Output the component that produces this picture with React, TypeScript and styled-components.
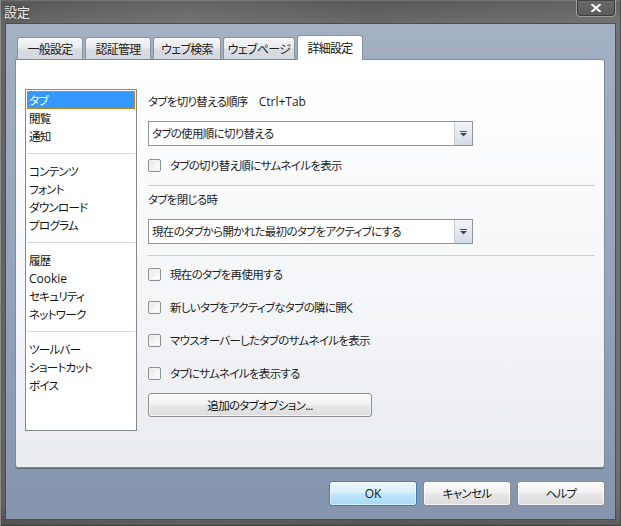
import React from "react";
import styled, { createGlobalStyle, css } from "styled-components";

const GlobalStyle = createGlobalStyle`
  html, body {
    margin: 0;
    padding: 0;
    background: #6a6a6a;
  }
  body {
    font-family: "Noto Sans CJK JP", "Liberation Sans", sans-serif;
    font-size: 11.5px;
    letter-spacing: -0.7px;
    font-feature-settings: "palt";
    color: #1e1e1e;
  }
`;

const Window = styled.div`
  width: 621px;
  height: 526px;
  box-sizing: border-box;
  display: flex;
  flex-direction: column;
  background:
    linear-gradient(90deg, rgba(0, 0, 0, 0.08), rgba(255, 255, 255, 0.04) 30%, rgba(0, 0, 0, 0.06) 60%, rgba(255, 255, 255, 0.03)),
    linear-gradient(180deg, #7c7c7c 0, #5e5e5e 2px, #686868 14px, #6e6e6e 23px, #6a6a6a 500px, #575757 526px);
  box-shadow: inset 1px 0 0 #8a8a8a, inset -1px 0 0 #4a4a4a, inset 0 -1px 0 #3e3e3e;
`;

const TitleBar = styled.div`
  height: 23px;
  display: flex;
  justify-content: space-between;
  align-items: flex-start;
  padding-left: 4px;
`;

const Title = styled.div`
  font-size: 13px;
  letter-spacing: 0;
  line-height: 24px;
  color: #ececec;
  text-shadow: 0 0 4px rgba(40, 40, 40, 0.8);
`;

const CloseButton = styled.div`
  width: 40px;
  height: 17px;
  margin-right: 5px;
  box-sizing: border-box;
  border: 1px solid #9c9c9c;
  border-top: none;
  border-radius: 0 0 4px 4px;
  background: linear-gradient(#6a6a6a, #5a5a5a);
  box-shadow: inset 0 0 0 1px rgba(30, 30, 30, 0.5);
  display: flex;
  align-items: center;
  justify-content: center;
`;

const Client = styled.div`
  flex: 1;
  margin: 0 5px 6px 5px;
  border: 1px solid #4e4e4e;
  background: linear-gradient(180deg, #a3b0c3 0%, #95a4ba 50%, #8595ae 100%);
  padding: 11px 10px 13px 9px;
  display: flex;
  flex-direction: column;
`;

const TabStrip = styled.div`
  height: 25px;
  margin-left: 2px;
  margin-bottom: -1px;
  display: flex;
  gap: 2px;
  align-items: flex-end;
  position: relative;
  z-index: 1;
`;

const Tab = styled.div<{ $w: number; $active?: boolean }>`
  width: ${(p) => p.$w}px;
  box-sizing: border-box;
  border: 1px solid #8a93a0;
  border-bottom: none;
  border-radius: 3px 3px 0 0;
  text-align: center;
  font-size: 12px;
  ${(p) =>
    p.$active
      ? css`
          height: 25px;
          line-height: 23px;
          background: #ffffff;
          color: #111;
        `
      : css`
          height: 22px;
          line-height: 21px;
          margin-bottom: 1px;
          color: #222;
          background: linear-gradient(180deg, #f4f5f6 0%, #e9ebee 45%, #d9dde3 55%, #d3d8de 100%);
          box-shadow: inset 0 1px 0 #ffffff;
        `}
`;

const Panel = styled.div`
  flex: 1;
  box-sizing: border-box;
  border: 1px solid #7f8a9b;
  border-radius: 0 3px 3px 3px;
  background: linear-gradient(180deg, #ffffff 0%, #f6f7f9 50%, #e9ecf0 100%);
  box-shadow: 0 1px 0 #5d6a7c;
  padding: 29px 9px 0 9px;
  display: flex;
  align-items: flex-start;
  gap: 11px;
`;

const ListBox = styled.div`
  width: 112px;
  height: 342px;
  flex: none;
  box-sizing: border-box;
  border: 1px solid #828790;
  background: #ffffff;
  padding: 1px;
`;

const ListItem = styled.div<{ $selected?: boolean }>`
  height: 18px;
  line-height: 18px;
  padding-left: 2px;
  white-space: nowrap;
  color: #111;
  ${(p) =>
    p.$selected &&
    css`
      background: #3399ff;
      color: #ffffff;
      outline: 1px dotted #d08a2c;
      outline-offset: -1px;
    `}
`;

const ListSeparator = styled.div`
  height: 1px;
  margin: 8px 0;
  background: #d8d8d8;
`;

const Latin = styled.span`
  font-family: "Open Sans", "Liberation Sans", sans-serif;
  font-size: 12px;
  letter-spacing: 0;
`;

const Content = styled.div`
  flex: 1;
  padding-top: 3px;
  display: flex;
  flex-direction: column;
`;

const Label = styled.div<{ $mt?: number }>`
  height: 18px;
  line-height: 18px;
  margin-top: ${(p) => p.$mt ?? 0}px;
  white-space: nowrap;
`;

const Shortcut = styled(Latin)`
  margin-left: 11px;
`;

const Select = styled.div<{ $mt?: number }>`
  width: 325px;
  height: 25px;
  margin-top: ${(p) => p.$mt ?? 11}px;
  box-sizing: border-box;
  border: 1px solid #8f949b;
  background: #ffffff;
  display: flex;
`;

const SelectText = styled.div`
  flex: 1;
  padding-left: 3px;
  line-height: 23px;
  white-space: nowrap;
`;

const SelectArrow = styled.div`
  width: 17px;
  border-left: 1px solid #c5cbd3;
  background: linear-gradient(180deg, #f2f4f7 0%, #e4e8ee 50%, #d5dce6 100%);
  display: flex;
  align-items: center;
  justify-content: center;
`;

const CheckRow = styled.div<{ $mt: number }>`
  height: 18px;
  margin-top: ${(p) => p.$mt}px;
  display: flex;
  align-items: center;
  gap: 9px;
  white-space: nowrap;
`;

const Box = styled.span`
  width: 13px;
  height: 13px;
  flex: none;
  box-sizing: border-box;
  border: 1px solid #8e8f8f;
  border-radius: 2px;
  background: linear-gradient(135deg, #e3e3e3 0%, #f6f6f6 60%, #ffffff 100%);
  box-shadow: inset 0 0 0 1px #f4f4f4;
`;

const Rule = styled.div<{ $mt: number }>`
  height: 1px;
  margin-top: ${(p) => p.$mt}px;
  background: #c8cbd0;
`;

const Button = styled.div<{ $w: number; $default?: boolean; $mt?: number }>`
  width: ${(p) => p.$w}px;
  height: ${(p) => (p.$default !== undefined ? 25 : 24)}px;
  margin-top: ${(p) => p.$mt ?? 0}px;
  box-sizing: border-box;
  border-radius: 3px;
  text-align: center;
  line-height: ${(p) => (p.$default !== undefined ? 23 : 22)}px;
  color: #111;
  white-space: nowrap;
  ${(p) =>
    p.$default
      ? css`
          border: 1px solid #3c7fb1;
          background: linear-gradient(180deg, #eaf6fd 0%, #d9f0fc 45%, #bee6fd 55%, #a7d9f5 100%);
          box-shadow: inset 0 0 0 1px rgba(255, 255, 255, 0.6);
        `
      : css`
          border: 1px solid #8d8d8d;
          background: linear-gradient(180deg, #fbfbfb 0%, #f1f1f1 45%, #e6e6e6 55%, #dcdcdc 100%);
          box-shadow: inset 0 0 0 1px rgba(255, 255, 255, 0.7);
        `}
`;

const ButtonRow = styled.div`
  margin-top: 13px;
  display: flex;
  justify-content: flex-end;
  gap: 6px;
`;

const Arrow = () => (
  <svg width="7" height="6" viewBox="0 0 7 6">
    <rect x="0" y="0" width="7" height="1" fill="#4a5566" />
    <polygon points="0,2 7,2 3.5,5.5" fill="#3b4656" />
  </svg>
);

const CloseGlyph = () => (
  <svg width="10" height="8" viewBox="0 0 10 8">
    <path d="M1 0.5 L9 7.5 M9 0.5 L1 7.5" stroke="#f2f2f2" strokeWidth="2.2" strokeLinecap="square" />
  </svg>
);

const tabs = [
  { label: "一般設定", w: 66 },
  { label: "認証管理", w: 66 },
  { label: "ウェブ検索", w: 68 },
  { label: "ウェブページ", w: 72 },
  { label: "詳細設定", w: 66, active: true },
];

const groups = [
  ["タブ", "閲覧", "通知"],
  ["コンテンツ", "フォント", "ダウンロード", "プログラム"],
  ["履歴", "Cookie", "セキュリティ", "ネットワーク"],
  ["ツールバー", "ショートカット", "ボイス"],
];

const checks = [
  "現在のタブを再使用する",
  "新しいタブをアクティブなタブの隣に開く",
  "マウスオーバーしたタブのサムネイルを表示",
  "タブにサムネイルを表示する",
];

const isLatin = (s: string) => /^[\x20-\x7e]+$/.test(s);

export default function App() {
  return (
    <>
      <GlobalStyle />
      <Window>
        <TitleBar>
          <Title>設定</Title>
          <CloseButton>
            <CloseGlyph />
          </CloseButton>
        </TitleBar>
        <Client>
          <TabStrip>
            {tabs.map((t) => (
              <Tab key={t.label} $w={t.w} $active={t.active}>
                {t.label}
              </Tab>
            ))}
          </TabStrip>
          <Panel>
            <ListBox>
              {groups.map((g, gi) => (
                <React.Fragment key={gi}>
                  {gi > 0 && <ListSeparator />}
                  {g.map((item) => (
                    <ListItem key={item} $selected={item === "タブ"}>
                      {isLatin(item) ? <Latin>{item}</Latin> : item}
                    </ListItem>
                  ))}
                </React.Fragment>
              ))}
            </ListBox>
            <Content>
              <Label>
                タブを切り替える順序<Shortcut>Ctrl+Tab</Shortcut>
              </Label>
              <Select>
                <SelectText>タブの使用順に切り替える</SelectText>
                <SelectArrow>
                  <Arrow />
                </SelectArrow>
              </Select>
              <CheckRow $mt={10}>
                <Box />
                タブの切り替え順にサムネイルを表示
              </CheckRow>
              <Rule $mt={11} />
              <Label $mt={4}>タブを閉じる時</Label>
              <Select>
                <SelectText>現在のタブから開かれた最初のタブをアクティブにする</SelectText>
                <SelectArrow>
                  <Arrow />
                </SelectArrow>
              </Select>
              <Rule $mt={11} />
              {checks.map((c, i) => (
                <CheckRow key={c} $mt={i === 0 ? 9 : 15}>
                  <Box />
                  {c}
                </CheckRow>
              ))}
              <Button $w={224} $mt={11}>
                追加のタブオプション...
              </Button>
            </Content>
          </Panel>
          <ButtonRow>
            <Button $w={88} $default>
              <Latin>OK</Latin>
            </Button>
            <Button $w={88} $default={false}>
              キャンセル
            </Button>
            <Button $w={88} $default={false}>
              ヘルプ
            </Button>
          </ButtonRow>
        </Client>
      </Window>
    </>
  );
}
